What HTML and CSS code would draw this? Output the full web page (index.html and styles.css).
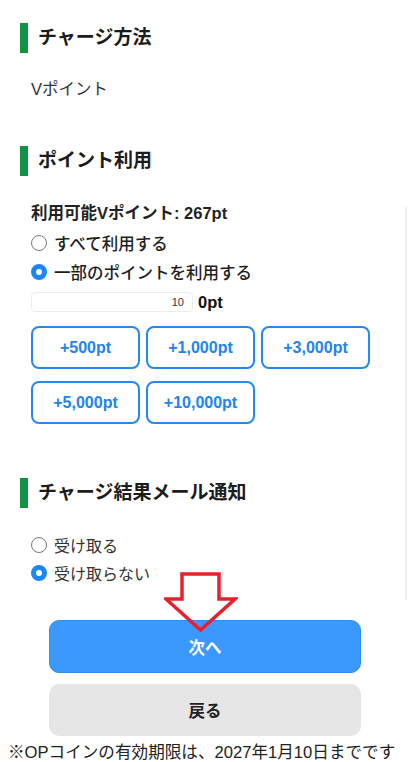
FILE: index.html
```html
<!DOCTYPE html>
<html lang="ja">
<head>
<meta charset="utf-8">
<link rel="stylesheet" href="styles.css">
</head>
<body>
<div class="page">
  <h2 class="sec-title first">チャージ方法</h2>
  <p class="method">Vポイント</p>

  <h2 class="sec-title second">ポイント利用</h2>
  <div class="points">
    <p class="avail">利用可能Vポイント: 267pt</p>
    <div class="radio-row strong"><span class="radio"></span><span>すべて利用する</span></div>
    <div class="radio-row strong"><span class="radio on"></span><span>一部のポイントを利用する</span></div>
    <div class="input-row">
      <div class="num-input">10</div>
      <span class="unit">0pt</span>
    </div>
    <div class="add-grid">
      <button class="add-btn">+500pt</button>
      <button class="add-btn">+1,000pt</button>
      <button class="add-btn">+3,000pt</button>
      <button class="add-btn">+5,000pt</button>
      <button class="add-btn">+10,000pt</button>
    </div>
  </div>

  <h2 class="sec-title third">チャージ結果メール通知</h2>
  <div class="mail">
    <div class="radio-row light"><span class="radio"></span><span>受け取る</span></div>
    <div class="radio-row light"><span class="radio on"></span><span>受け取らない</span></div>
  </div>

  <div class="actions">
    <button class="btn next">次へ</button>
    <button class="btn back">戻る</button>
  </div>
  <p class="note">※OPコインの有効期限は、2027年1月10日までです</p>

  <div class="track"></div>
  <svg class="arrow" width="74" height="60" viewBox="0 0 74 60">
    <path d="M18 2 H55 V27 H71 L36.5 58 L2 27 H18 Z" fill="none" stroke="#e8202a" stroke-width="3.5" stroke-linejoin="miter"/>
  </svg>
</div>
</body>
</html>
```

FILE: styles.css
```css
* { box-sizing: border-box; }
html, body { margin: 0; padding: 0; background: #fff; }
body {
  font-family: "Liberation Sans", "Noto Sans CJK JP", sans-serif;
  color: #222;
  width: 410px;
  height: 762px;
  overflow: hidden;
}
.page { position: relative; height: 762px; padding-top: 23px; }
p { margin: 0; }

.sec-title {
  margin: 0 0 0 20px;
  border-left: 8px solid #0f9441;
  padding-left: 10px;
  height: 30px;
  line-height: 30px;
  font-size: 19px;
  font-weight: 700;
  color: #1c1c1c;
}
.sec-title.second { margin-top: 45px; }
.sec-title.third { margin-top: 54px; }

.method {
  margin-top: 24px;
  padding-left: 31px;
  font-size: 16.5px;
  line-height: 24px;
  color: #333;
}

.points { padding-left: 31px; margin-top: 23px; }
.avail {
  font-size: 16.5px;
  font-weight: 700;
  line-height: 29px;
  color: #222;
}
.radio-row {
  display: flex;
  align-items: center;
  gap: 7px;
  height: 29px;
  font-size: 16.5px;
}
.radio-row.strong { font-weight: 500; color: #1e1e1e; }
.radio-row.light { color: #333; height: 28px; font-size: 16px; }
.radio {
  width: 16px;
  height: 16px;
  border-radius: 50%;
  border: 1.5px solid #7a7a7a;
  background: #fff;
  flex: none;
}
.radio.on {
  border: 5px solid #1a86fa;
  background: #fff;
}

.input-row {
  display: flex;
  align-items: center;
  gap: 5px;
  margin-top: 6px;
}
.num-input {
  width: 162px;
  height: 20px;
  border: 1px solid #ececec;
  border-radius: 4px;
  font-size: 11px;
  line-height: 18px;
  text-align: right;
  padding-right: 8px;
  color: #333;
}
.unit { font-size: 16.5px; font-weight: 700; color: #111; }

.add-grid {
  display: grid;
  grid-template-columns: repeat(3, 109px);
  column-gap: 6px;
  row-gap: 12px;
  margin-top: 14px;
}
.add-btn {
  height: 43px;
  border: 2px solid #2489f6;
  border-radius: 8px;
  background: #fff;
  color: #2084f2;
  font-family: inherit;
  font-size: 16px;
  font-weight: 700;
  padding: 0;
}

.mail { padding-left: 31px; margin-top: 23px; }

.actions {
  display: flex;
  flex-direction: column;
  gap: 11px;
  padding: 0 49px;
  margin-top: 33px;
}
.btn {
  height: 53px;
  border-radius: 10px;
  font-family: inherit;
  font-size: 16.5px;
  font-weight: 700;
  padding: 0;
}
.btn.next {
  background: #3b98fd;
  border: 1px solid #2f8cf2;
  color: #fff;
}
.btn.back {
  height: 52px;
  background: #e6e6e6;
  border: none;
  color: #222;
}

.note {
  margin-top: 6px;
  padding-left: 8px;
  font-size: 16.6px;
  line-height: 22px;
  color: #222;
  white-space: nowrap;
}

.track {
  position: absolute;
  left: 405px;
  top: 207px;
  width: 2px;
  height: 393px;
  background: #efefef;
}
.arrow {
  position: absolute;
  left: 164px;
  top: 572px;
}
```
